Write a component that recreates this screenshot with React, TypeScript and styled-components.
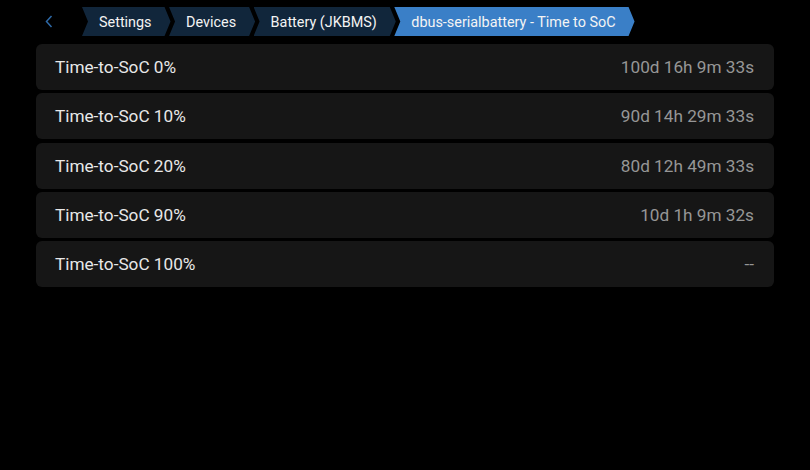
import React from "react";
import styled, { createGlobalStyle } from "styled-components";

const Global = createGlobalStyle`
  html, body { margin: 0; padding: 0; background: #000; }
  body { font-family: Roboto, "Noto Sans", sans-serif; }
  #root { width: 810px; height: 470px; background: #000; }
`;

const Page = styled.div`
  width: 810px;
  height: 470px;
  box-sizing: border-box;
  padding: 7px 36px 0 36px;
  display: flex;
  flex-direction: column;
  gap: 8px;
`;

const TopBar = styled.div`
  display: flex;
  align-items: center;
  height: 29px;
`;

const BackButton = styled.div`
  width: 46px;
  height: 29px;
  display: flex;
  align-items: center;
  padding-left: 9px;
  box-sizing: border-box;
`;

const Crumbs = styled.div`
  display: flex;
  align-items: center;
`;

const Crumb = styled.div<{ $active?: boolean }>`
  height: 29px;
  box-sizing: border-box;
  display: flex;
  align-items: center;
  padding: 1px 19px 0 17px;
  margin-right: -1.5px;
  font-size: 14.4px;
  color: #f4f4f4;
  background: ${(p) => (p.$active ? "#3a7fc7" : "#11263b")};
  clip-path: polygon(0 0, calc(100% - 6px) 0, 100% 50%, calc(100% - 6px) 100%, 0 100%, 6px 50%);
  white-space: nowrap;
`;

const List = styled.div`
  display: flex;
  flex-direction: column;
  gap: 3.25px;
`;

const Row = styled.div`
  height: 46px;
  border-radius: 6px;
  background: #161616;
  display: flex;
  align-items: center;
  justify-content: space-between;
  padding: 0 20px 0 19px;
  font-size: 17.2px;
`;

const Label = styled.span`
  color: #e8e8e8;
`;

const Value = styled.span`
  color: #969696;
`;

const rows = [
  ["Time-to-SoC 0%", "100d 16h 9m 33s"],
  ["Time-to-SoC 10%", "90d 14h 29m 33s"],
  ["Time-to-SoC 20%", "80d 12h 49m 33s"],
  ["Time-to-SoC 90%", "10d 1h 9m 32s"],
  ["Time-to-SoC 100%", "--"],
];

export default function App() {
  return (
    <>
      <Global />
      <Page>
        <TopBar>
          <BackButton>
            <svg width="8" height="13" viewBox="0 0 8 13">
              <path d="M6.5 1 L1.5 6.5 L6.5 12" fill="none" stroke="#2e6aa8" strokeWidth="1.5" />
            </svg>
          </BackButton>
          <Crumbs>
            <Crumb>Settings</Crumb>
            <Crumb>Devices</Crumb>
            <Crumb>Battery (JKBMS)</Crumb>
            <Crumb $active>dbus-serialbattery - Time to SoC</Crumb>
          </Crumbs>
        </TopBar>
        <List>
          {rows.map(([l, v]) => (
            <Row key={l}>
              <Label>{l}</Label>
              <Value>{v}</Value>
            </Row>
          ))}
        </List>
      </Page>
    </>
  );
}
